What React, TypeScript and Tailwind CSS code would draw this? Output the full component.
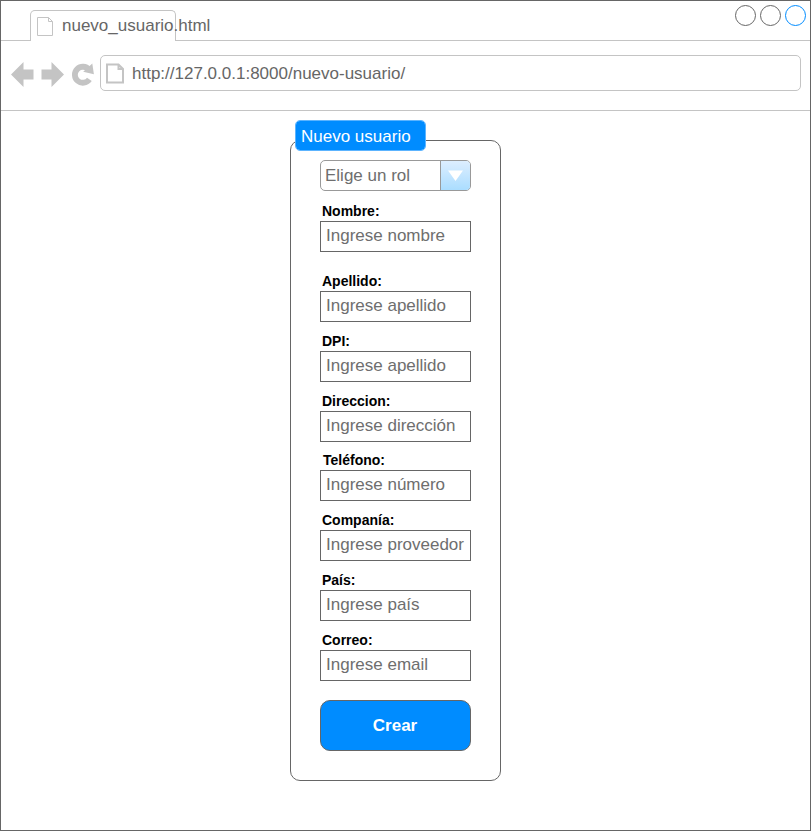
type Field = { label: string; hint: string; gap: string; indent: string };

const fields: Field[] = [
  { label: "Nombre:", hint: "Ingrese nombre", gap: "mt-[10px]", indent: "pl-[2px]" },
  { label: "Apellido:", hint: "Ingrese apellido", gap: "mt-[19px]", indent: "pl-[2px]" },
  { label: "DPI:", hint: "Ingrese apellido", gap: "mt-[9px]", indent: "pl-[2px]" },
  { label: "Direccion:", hint: "Ingrese dirección", gap: "mt-[9px]", indent: "pl-[2px]" },
  { label: "Teléfono:", hint: "Ingrese número", gap: "mt-[8px]", indent: "pl-[3px]" },
  { label: "Companía:", hint: "Ingrese proveedor", gap: "mt-[9px]", indent: "pl-[2px]" },
  { label: "País:", hint: "Ingrese país", gap: "mt-[9px]", indent: "pl-[2px]" },
  { label: "Correo:", hint: "Ingrese email", gap: "mt-[9px]", indent: "pl-[2px]" },
];

function PageIcon({ bold = false }: { bold?: boolean }) {
  return (
    <svg width="18" height="21" viewBox="0 0 18 21" fill="none" stroke="#c4c4c4" strokeWidth={bold ? 2 : 1} className="shrink-0">
      {bold ? (
        <path d="M1 1.5H12.5L17 6V19.5H1ZM12.5 1.5V6H17" />
      ) : (
        <path d="M1.5 1.5H12.5L16.5 5.5V19.5H1.5ZM12.5 1.5V5.5H16.5" />
      )}
    </svg>
  );
}

function TabStrip() {
  return (
    <div className="flex h-10 items-end">
      <div className="h-full w-[29px] shrink-0 border-b border-[#c4c4c4]" />
      <div className="flex h-[31px] w-[146px] shrink-0 items-start rounded-t-[5px] border border-b-0 border-[#c4c4c4] pl-[5px] pt-[5px]">
        <PageIcon />
        <span className="ml-[8px] whitespace-nowrap text-[17px] leading-5 text-[#666]">nuevo_usuario.html</span>
      </div>
      <div className="flex h-full flex-1 justify-end gap-1 border-b border-[#c4c4c4] pr-1 pt-1">
        <div className="size-[21px] rounded-full border border-[#666]" />
        <div className="size-[21px] rounded-full border border-[#666]" />
        <div className="size-[21px] rounded-full border border-[#008cff]" />
      </div>
    </div>
  );
}

function Toolbar() {
  return (
    <div className="flex h-[70px] items-start border-b border-[#c4c4c4] pr-[9px] pt-[14px]">
      <svg width="99" height="40" viewBox="1 55 99 40" fill="#c4c4c4" className="shrink-0">
        <path d="M11 74.5L23.5 62V69.5H33.5V79.5H23.5V87Z" />
        <path d="M64 74.5L51.5 62V69.5H41.5V79.5H51.5V87Z" />
        <path d="M89 69.6A8 8 0 1 0 89.4 79.4" fill="none" stroke="#c4c4c4" strokeWidth="5.8" />
        <path d="M92.3 63.5L93.9 74.2L83.2 71.8Z" />
      </svg>
      <div className="flex h-9 flex-1 items-start rounded-[5px] border border-[#c4c4c4] pl-[5px] pt-[7px]">
        <PageIcon bold />
        <span className="ml-[8px] text-[17px] leading-[22px] text-[#666]">http://127.0.0.1:8000/nuevo-usuario/</span>
      </div>
    </div>
  );
}

function RoleSelect() {
  return (
    <div className="flex h-[31px] overflow-hidden rounded-[5px] border border-[#999]">
      <div className="flex-1 pl-1 pt-[5px] text-[17px] leading-5 text-[#6e6e6e]">Elige un rol</div>
      <div className="flex w-[30px] items-center justify-center border-l border-[#999] bg-linear-to-b from-[#ddeeff] to-[#aaddff]">
        <svg width="15" height="11" viewBox="0 0 15 11" fill="#fff">
          <path d="M0 0.5H15L7.5 11Z" />
        </svg>
      </div>
    </div>
  );
}

function UserForm() {
  return (
    <div className="relative ml-[289px] mt-[29px] h-[641px] w-[211px] rounded-[10px] border border-[#666] px-[29px] pt-[19px]">
      <div className="absolute -top-[21px] left-1 h-[31px] w-[131px] rounded-[5px] border border-[#5cb4ff] bg-[#008cff] bg-clip-padding pl-[5px] pt-[6px] text-[17px] leading-5 text-white">
        Nuevo usuario
      </div>
      <RoleSelect />
      {fields.map((f) => (
        <div key={f.label} className={f.gap}>
          <div className={`h-5 text-[14px] leading-5 font-bold text-black ${f.indent}`}>{f.label}</div>
          <div className="h-[31px] border border-[#666] pl-[5px] pt-1 text-[17px] leading-5 whitespace-nowrap text-[#6e6e6e]">{f.hint}</div>
        </div>
      ))}
      <button className="mt-[19px] h-[51px] w-full rounded-[10px] border border-[#666] bg-[#008cff] pr-px text-[17px] font-bold text-white">
        Crear
      </button>
    </div>
  );
}

export default function App() {
  return (
    <div className="h-[831px] w-[811px] overflow-hidden border border-[#666] bg-white font-['Liberation_Sans',Arial,sans-serif]">
      <TabStrip />
      <Toolbar />
      <UserForm />
    </div>
  );
}
